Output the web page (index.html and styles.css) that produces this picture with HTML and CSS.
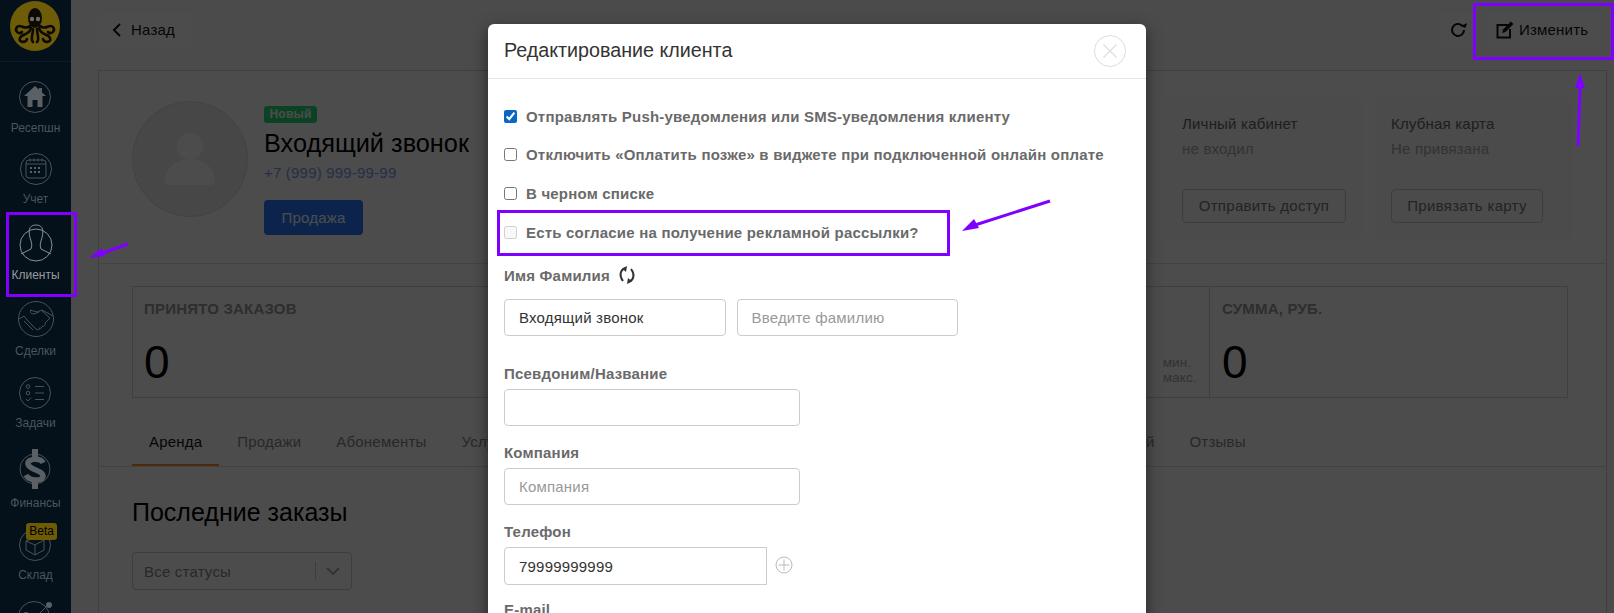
FILE: index.html
```html
<!DOCTYPE html>
<html lang="ru">
<head>
<meta charset="UTF-8">
<title>Редактирование клиента</title>
<link rel="stylesheet" href="styles.css">
</head>
<body>
<div class="page">
    <aside class="sidebar">
        <div class="logo">
            <svg width="50" height="50" viewBox="0 0 50 50">
                <circle cx="25" cy="25" r="25" fill="#6f5c08"/>
                <ellipse cx="25" cy="17" rx="7" ry="10" fill="#0b0a06"/>
                <circle cx="22" cy="18" r="2.200" fill="#6f6f60"/>
                <circle cx="28" cy="18" r="2.200" fill="#6f6f60"/>
                <g fill="none" stroke="#0b0a06" stroke-width="2.600" stroke-linecap="round">
                    <path d="M20 25C15 30 10 22 7 26S9 34 12 31"/>
                    <path d="M30 25C35 30 40 22 43 26S41 34 38 31"/>
                    <path d="M21 27C19 35 12 32 10 37S16 42 17 38"/>
                    <path d="M29 27C31 35 38 32 40 37S34 42 33 38"/>
                    <path d="M23 28C23 34 20 38 23 41"/>
                    <path d="M27 28C27 34 30 38 27 41"/>
                </g>
            </svg>
        </div>
        <nav class="nav">
            <a class="nav-item nav-item--first">
                <svg width="34" height="32" viewBox="0 0 34 32">
                    <circle cx="17" cy="16" r="15.500" class="ring"/>
                    <path d="M17 5L6 15h3.500v11h5v-7h5v7h5V15H28l-4-3.600V7h-3v1.700z" class="solid"/>
                </svg>
                <span>Ресепшн</span>
            </a>
            <a class="nav-item">
                <svg width="34" height="32" viewBox="0 0 34 32">
                    <circle cx="17" cy="16" r="15.500" class="ring"/>
                    <rect x="7" y="7" width="20" height="18" rx="3" class="ring"/>
                    <path d="M7 11h20M11 5.500v3M15 5.500v3M19 5.500v3M23 5.500v3" class="ring"/>
                    <path d="M11 14h2v2h-2zM15 14h2v2h-2zM19 14h2v2h-2zM11 18h2v2h-2zM15 18h2v2h-2zM19 18h2v2h-2z" class="solid"/>
                </svg>
                <span>Учет</span>
            </a>
            <a class="nav-item nav-item--clients">
                <svg width="34" height="38" viewBox="0 0 34 38">
                    <circle cx="17" cy="21" r="16" class="ring-light"/>
                    <path d="M12 17C9 8 9 1 17 1S25 8 22 17C21 20 21 22 22 25L32 30M12 17C13 20 13 22 12 25L2 30" class="ring-light"/>
                </svg>
                <span>Клиенты</span>
            </a>
            <a class="nav-item">
                <svg width="36" height="36" viewBox="0 0 36 36">
                    <circle cx="18" cy="18" r="17.500" class="ring"/>
                    <path d="M12 9l7 2 5-2 11 6M1 18l5-3 4 5 8 8c3 2 4 0 3-1 2 1 4-1 3-2 2 1 4-1 3-3l5-5-8-7M13 9c-1 2-1 4 3 4l5-2" class="ring"/>
                    <path d="M6 20l3 3M9 23l3 3M12 26l3 3" class="ring"/>
                </svg>
                <span>Сделки</span>
            </a>
            <a class="nav-item">
                <svg width="34" height="32" viewBox="0 0 34 32">
                    <circle cx="17" cy="16" r="15.500" class="ring"/>
                    <circle cx="10" cy="9.500" r="1.800" class="ring"/>
                    <circle cx="10" cy="16" r="1.800" class="ring"/>
                    <path d="M8 22l2 2 3-3.500M17 9.500h9M17 16h9M17 22.500h9" class="ring"/>
                </svg>
                <span>Задачи</span>
            </a>
            <a class="nav-item">
                <svg width="34" height="40" viewBox="0 0 34 40">
                    <circle cx="17" cy="20" r="15" class="ring"/>
                    <path d="M25 14C23 9 9 9 10 15S25 21 25 27 11 32 8 26" fill="none" stroke="#5a6064" stroke-width="5.500"/>
                    <path d="M14 0h6v9h-6zM14 31h6v9h-6z" class="solid"/>
                </svg>
                <span>Финансы</span>
            </a>
            <a class="nav-item nav-item--stock">
                <svg width="34" height="32" viewBox="0 0 34 32">
                    <circle cx="17" cy="16" r="15.500" class="ring"/>
                    <path d="M8 12l10-4 8 3v10l-9 5-9-5zM8 12l9 4 9-5M17 16v10" class="ring"/>
                </svg>
                <span>Склад</span>
                <em class="beta">Beta</em>
            </a>
            <a class="nav-item">
                <svg width="38" height="32" viewBox="0 0 38 32">
                    <circle cx="17" cy="16" r="15.500" class="ring"/>
                    <path d="M8 20l9-2 14-14" class="ring"/>
                    <circle cx="9" cy="14" r="3" class="solid"/>
                    <circle cx="32" cy="4" r="3" class="solid"/>
                </svg>
            </a>
        </nav>
    </aside>

    <main class="main">
        <div class="topbar">
            <a class="top-btn top-btn--back">
                <svg width="10" height="14" viewBox="0 0 10 14"><path d="M8 1L2 7l6 6" class="line"/></svg>
                Назад
            </a>
            <div class="top-actions">
                <a class="top-btn top-btn--icon">
                    <svg width="18" height="18" viewBox="0 0 18 18">
                        <path d="M15 9a6 6 0 1 1-2-4.500" class="line"/>
                        <path d="M11 6h6V1z" fill="#151515" transform="rotate(20 14 5)"/>
                    </svg>
                </a>
                <a class="top-btn top-btn--edit">
                    <svg width="18" height="18" viewBox="0 0 18 18">
                        <path d="M13 4H1.500v12.500H14V8" class="line"/>
                        <path d="M6 12l1-3.500 8-8L17.500 3l-8 8z" fill="#151515"/>
                    </svg>
                    Изменить
                </a>
            </div>
        </div>

        <section class="panel">
            <div class="profile">
                <div class="avatar">
                    <svg width="50" height="52" viewBox="0 0 50 52">
                        <circle cx="25" cy="13" r="13" fill="#fff"/>
                        <path d="M5 52C-2 52-1 42 4 36 9 29 16 26 25 26S41 29 46 36C51 42 52 52 45 52z" fill="#fff"/>
                    </svg>
                </div>
                <div class="profile-info">
                    <span class="badge">Новый</span>
                    <h1 class="client-name">Входящий звонок</h1>
                    <a class="client-phone">+7 (999) 999-99-99</a>
                    <button class="btn-sale">Продажа</button>
                </div>
                <div class="side-cards">
                    <div class="side-card">
                        <div class="side-title">Личный кабинет</div>
                        <div class="side-value">не входил</div>
                        <button class="btn-outline btn-outline--access">Отправить доступ</button>
                    </div>
                    <div class="side-card">
                        <div class="side-title">Клубная карта</div>
                        <div class="side-value">Не привязана</div>
                        <button class="btn-outline btn-outline--card">Привязать карту</button>
                    </div>
                </div>
            </div>

            <div class="stats">
                <div class="stat stat--wide">
                    <div class="stat-title">ПРИНЯТО ЗАКАЗОВ</div>
                    <div class="stat-value">0</div>
                    <div class="stat-range">мин.<br>макс.</div>
                </div>
                <div class="stat stat--sum">
                    <div class="stat-title">СУММА, РУБ.</div>
                    <div class="stat-value">0</div>
                </div>
            </div>

            <div class="tabs">
                <a class="tab tab--active">Аренда</a>
                <a class="tab">Продажи</a>
                <a class="tab">Абонементы</a>
                <a class="tab">Услуги</a>
                <a class="tab tab--far">Комментарий</a>
                <a class="tab">Отзывы</a>
            </div>

            <h2 class="section-title">Последние заказы</h2>
            <div class="status-select">
                <span>Все статусы</span>
                <i class="select-sep"></i>
                <svg width="14" height="8" viewBox="0 0 14 8"><path d="M1 1l6 6 6-6" fill="none" stroke="#aaa" stroke-width="2"/></svg>
            </div>
        </section>
    </main>

    <div class="backdrop"></div>

    <div class="modal">
        <div class="modal-head">
            <h3>Редактирование клиента</h3>
            <svg width="32" height="32" viewBox="0 0 32 32">
                <circle cx="16" cy="16" r="15.500" fill="none" stroke="#ddd"/>
                <path d="M9.500 9.500l13 13M22.500 9.500l-13 13" fill="none" stroke="#ddd" stroke-width="1.200"/>
            </svg>
        </div>
        <div class="modal-body">
            <label class="check"><input type="checkbox" checked> Отправлять Push-уведомления или SMS-уведомления клиенту</label>
            <label class="check"><input type="checkbox"> Отключить «Оплатить позже» в виджете при подключенной онлайн оплате</label>
            <label class="check"><input type="checkbox"> В черном списке</label>
            <label class="check"><input type="checkbox" disabled> Есть согласие на получение рекламной рассылки?</label>

            <div class="name-label">
                Имя Фамилия
                <svg width="18" height="18" viewBox="0 0 18 18">
                    <path d="M7 2.500C2 4 1 10 5 15M11 15.500C16 14 17 8 13 3" fill="none" stroke="#333" stroke-width="2"/>
                    <path d="M9 0L4 2.500 8 6zM9 18l5-2.500L10 12z" fill="#333"/>
                </svg>
            </div>
            <div class="name-row">
                <input class="input" type="text" value="Входящий звонок">
                <input class="input" type="text" placeholder="Введите фамилию">
            </div>

            <div class="field field--first">
                <label>Псевдоним/Название</label>
                <input class="input" type="text">
            </div>
            <div class="field">
                <label>Компания</label>
                <input class="input" type="text" placeholder="Компания">
            </div>
            <div class="field field--phone">
                <label>Телефон</label>
                <div class="phone-row">
                    <input class="input input--phone" type="text" value="79999999999">
                    <svg width="18" height="18" viewBox="0 0 18 18">
                        <circle cx="9" cy="9" r="8" fill="none" stroke="#bbb"/>
                        <path d="M9 3.500v11M3.500 9h11" stroke="#bbb"/>
                    </svg>
                </div>
            </div>
            <div class="field field--mail">
                <label>E-mail</label>
            </div>
        </div>
    </div>

    <div class="note-box note-box--edit"></div>
    <div class="note-box note-box--clients"></div>
    <div class="note-box note-box--consent"></div>
    <svg class="note-arrows" width="1614" height="613" viewBox="0 0 1614 613">
        <g stroke="#7f00ff" stroke-width="3" fill="#7f00ff">
            <path d="M128 244L100 254" fill="none"/>
            <path d="M89 258L102 248 105 256z" stroke="none"/>
            <path d="M1050 201L975 225" fill="none"/>
            <path d="M962 231L974 219 979 228z" stroke="none"/>
            <path d="M1578 146L1580 88" fill="none"/>
            <path d="M1580 73L1575 88H1585z" stroke="none"/>
        </g>
    </svg>
</div>
</body>
</html>
```

FILE: styles.css
```css
* {
    box-sizing: border-box;
}
html, body {
    margin: 0;
    height: 100%;
    overflow: hidden;
}
body {
    font-family: "Liberation Sans", Arial, sans-serif;
    font-size: 15px;
    letter-spacing: 0.2px;
    color: #000;
    background-color: #fafafa;
}
.page {
    position: relative;
    display: flex;
    width: 1614px;
    height: 613px;
    overflow: hidden;
}

/* sidebar */
.sidebar {
    flex: 0 0 71px;
    height: 613px;
    overflow: hidden;
    background-color: #04101a;
    letter-spacing: 0;
}
.logo {
    height: 62px;
    padding: 1px 0 0 10px;
    border-bottom: 1px solid #0c1b26;
}
.nav {
    display: flex;
    flex-direction: column;
    align-items: center;
    padding-top: 19px;
}
.nav-item {
    position: relative;
    display: flex;
    flex-direction: column;
    align-items: center;
    margin-bottom: 19px;
    color: #4c565c;
    font-size: 12px;
    line-height: 14px;
}
.nav-item svg {
    display: block;
}
.nav-item span {
    margin-top: 7px;
}
.nav-item--first {
    margin-bottom: 18px;
}
.nav-item--first span {
    margin-top: 8px;
}
.nav-item:nth-child(2) {
    margin-bottom: 18px;
}
.nav-item--clients {
    color: #9a9a9a;
}
.nav-item--clients span {
    margin-top: 6px;
}
.ring {
    fill: none;
    stroke: #4a5358;
    stroke-width: 1;
}
.ring-light {
    fill: none;
    stroke: #8b8f92;
    stroke-width: 1;
}
.solid {
    fill: #5a6064;
}
.beta {
    position: absolute;
    top: -6px;
    left: 8px;
    width: 31px;
    height: 17px;
    border-radius: 3px;
    background-color: #6e5b05;
    color: #000;
    font-style: normal;
    line-height: 17px;
    text-align: center;
}

/* main content */
.main {
    flex: 1;
    padding-left: 27px;
    padding-right: 7px;
    height: 613px;
    overflow: hidden;
}
.topbar {
    display: flex;
    justify-content: space-between;
    height: 70px;
    padding-top: 13px;
}
.top-actions {
    display: flex;
    gap: 12px;
    margin-right: 7px;
}
.top-btn {
    display: flex;
    align-items: center;
    height: 33px;
    border-radius: 4px;
    background-color: #fff;
    color: #111;
}
.top-btn--back {
    gap: 9px;
    padding-left: 14px;
    width: 95px;
}
.top-btn--icon {
    justify-content: center;
    width: 35px;
}
.top-btn--edit {
    gap: 5px;
    width: 113px;
    padding-left: 9px;
}
.line {
    fill: none;
    stroke: #151515;
    stroke-width: 2;
}
.panel {
    height: 560px;
    border: 1px solid #d4d4d4;
    background-color: #fff;
}
.profile {
    display: flex;
    height: 193px;
    padding: 26px 34px 0 33px;
    border-bottom: 1px solid #e2e2e2;
}
.avatar {
    display: flex;
    align-items: center;
    justify-content: center;
    width: 116px;
    height: 116px;
    margin-top: 4px;
    padding-bottom: 1px;
    border: 1px solid #dcdcdc;
    border-radius: 50%;
    background-color: #eeeeee;
}
.profile-info {
    display: flex;
    flex-direction: column;
    align-items: flex-start;
    margin: 9px 0 0 16px;
}
.badge {
    width: 53px;
    height: 17px;
    border-radius: 3px;
    background-color: #22dd77;
    color: #fff;
    font-size: 12px;
    font-weight: bold;
    line-height: 17px;
    text-align: center;
}
.client-name {
    margin: 5px 0 0;
    font-size: 25.300px;
    font-weight: normal;
    line-height: 30px;
    letter-spacing: 0;
}
.client-phone {
    margin-top: 5px;
    color: #7a9cf0;
    line-height: 20px;
}
.btn-sale {
    width: 99px;
    height: 35px;
    margin-top: 17px;
    border: none;
    border-radius: 4px;
    background-color: #2b7bff;
    color: #fff;
    font: inherit;
    letter-spacing: inherit;
}
.side-cards {
    display: flex;
    gap: 13px;
    margin-left: auto;
}
.side-card {
    width: 196px;
    height: 143px;
    padding: 17px 15px;
    border-radius: 4px;
    background-color: #fafafa;
    line-height: 20px;
}
.side-title {
    color: #666;
}
.side-value {
    margin-top: 5px;
    color: #aaa;
}
.btn-outline {
    display: block;
    height: 34px;
    margin-top: 30px;
    padding: 0;
    border: 1px solid #ccc;
    border-radius: 4px;
    background-color: transparent;
    color: #777;
    font: inherit;
    letter-spacing: 0.3px;
}
.btn-outline--access {
    width: 164px;
}
.btn-outline--card {
    width: 152px;
}
.stats {
    display: flex;
    height: 112px;
    margin: 22px 38px 0 33px;
    border: 1px solid #d4d4d4;
}
.stat {
    position: relative;
    padding: 12px 12px 0;
}
.stat--wide {
    flex: 1;
    padding-left: 11px;
    border-right: 1px solid #d4d4d4;
}
.stat--sum {
    flex: 0 0 357px;
}
.stat-title {
    color: #999;
    font-weight: bold;
    line-height: 20px;
}
.stat-value {
    margin-top: 20px;
    font-size: 46px;
    line-height: 46px;
    letter-spacing: 0;
}
.stat-range {
    position: absolute;
    right: 12px;
    bottom: 12px;
    color: #aaa;
    font-size: 13.500px;
    line-height: 15px;
}
.tabs {
    display: flex;
    gap: 1px;
    margin-top: 22px;
    padding-left: 33px;
    border-bottom: 1px solid #ddd;
}
.tab {
    padding: 12px 17px;
    border-bottom: 2px solid transparent;
    color: #888;
    line-height: 20px;
}
.tab--active {
    border-bottom-color: #ff8a1f;
    color: #111;
}
.tab--far {
    margin-left: 514px;
}
.section-title {
    margin: 30px 0 0 33px;
    font-size: 25px;
    font-weight: normal;
    line-height: 30px;
    letter-spacing: 0;
}
.status-select {
    display: flex;
    align-items: center;
    width: 220px;
    height: 38px;
    margin: 25px 0 0 33px;
    padding: 0 11px;
    border: 1px solid #ccc;
    border-radius: 4px;
    color: #888;
}
.status-select span {
    flex: 1;
}
.select-sep {
    width: 1px;
    height: 18px;
    background-color: #ccc;
}
.status-select svg {
    margin-left: 10px;
}

/* modal */
.backdrop {
    position: absolute;
    top: 0;
    left: 71px;
    right: 0;
    bottom: 0;
    background-color: rgba(0,0,0,0.7);
}
.modal {
    position: absolute;
    top: 24px;
    left: 488px;
    width: 658px;
    height: 640px;
    border-radius: 6px;
    background-color: #fff;
    box-shadow: 0 5px 15px rgba(0,0,0,0.5);
}
.modal-head {
    display: flex;
    align-items: center;
    justify-content: space-between;
    height: 55px;
    padding: 0 20px 1px 16px;
    border-bottom: 1px solid #e5e5e5;
}
.modal-head h3 {
    margin: 0;
    color: #333;
    font-size: 19.700px;
    font-weight: normal;
    letter-spacing: 0;
}
.modal-body {
    padding: 18px 16px;
    color: #6a6a6a;
    font-weight: bold;
}
.check {
    display: flex;
    align-items: center;
    height: 38.600px;
}
.check input {
    width: 13px;
    height: 13px;
    margin: 0 9px 0 0;
    accent-color: #0b67c2;
}
.name-label {
    display: flex;
    align-items: center;
    gap: 8px;
    height: 20px;
    margin: 14px 0 14px 0;
}
.name-row {
    display: flex;
    gap: 11px;
    width: 454px;
}
.name-row .input {
    flex: 1;
    width: auto;
    min-width: 0;
}
.input {
    display: block;
    width: 296px;
    height: 37px;
    padding: 0 14px;
    border: 1px solid #ccc;
    border-radius: 4px;
    color: #333;
    font-family: inherit;
    font-size: 15px;
    letter-spacing: inherit;
}
.input::placeholder {
    color: #999;
}
.field {
    margin-top: 17px;
}
.field label {
    display: block;
    height: 20px;
    margin-bottom: 5px;
    line-height: 20px;
}
.field--first {
    margin-top: 28px;
}
.phone-row {
    display: flex;
    align-items: center;
    gap: 8px;
}
.phone-row svg {
    margin-bottom: 2px;
}
.input--phone {
    width: 263px;
    height: 38px;
    border-radius: 4px 0 0 4px;
}
.field--mail {
    margin-top: 15px;
}

/* annotations on top of the screenshot */
.note-box {
    position: absolute;
    border: 3px solid #7f00ff;
}
.note-box--edit {
    left: 1473px;
    top: 3px;
    width: 141px;
    height: 57px;
}
.note-box--clients {
    left: 6px;
    top: 212px;
    width: 71px;
    height: 85px;
}
.note-box--consent {
    left: 497px;
    top: 210px;
    width: 453px;
    height: 46px;
}
.note-arrows {
    position: absolute;
    top: 0;
    left: 0;
}
```
